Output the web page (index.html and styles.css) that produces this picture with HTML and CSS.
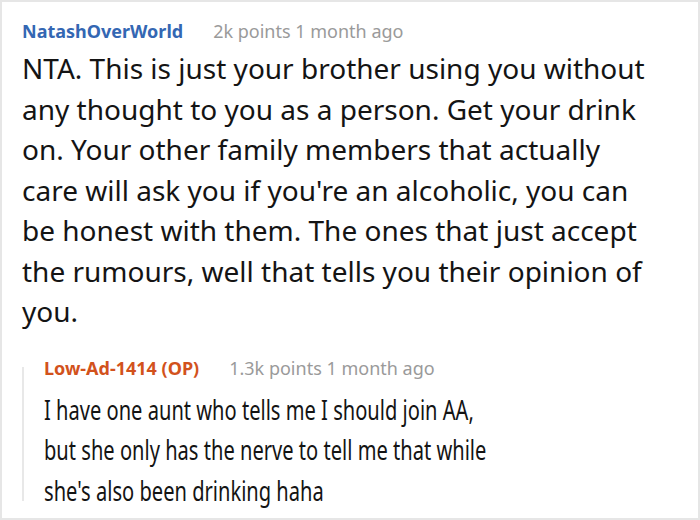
FILE: index.html
```html
<!DOCTYPE html>
<html lang="en">
<head>
<meta charset="utf-8">
<link rel="stylesheet" href="styles.css">
</head>
<body>
<div class="card">
  <div class="comment">
    <div class="meta">
      <span class="author">NatashOverWorld</span>
      <span class="info">2k points 1 month ago</span>
    </div>
    <p class="text">NTA. This is just your brother using you without<br>any thought to you as a person. Get your drink<br>on. Your other family members that actually<br>care will ask you if you're an alcoholic, you can<br>be honest with them. The ones that just accept<br>the rumours, well that tells you their opinion of<br>you.</p>
    <div class="reply">
      <div class="meta">
        <span class="author op">Low-Ad-1414 (OP)</span>
        <span class="info">1.3k points 1 month ago</span>
      </div>
      <p class="text condensed">I have one aunt who tells me I should join AA,<br>but she only has the nerve to tell me that while<br>she's also been drinking haha</p>
    </div>
  </div>
</div>
</body>
</html>
```
FILE: styles.css
```css
html, body {
  margin: 0;
  padding: 0;
  background: #ffffff;
}

.card {
  width: 700px;
  height: 520px;
  box-sizing: border-box;
  border: 2px solid #e6e6e6;
  padding: 14px 20px 0 20px;
  font-family: "Noto Sans", "Open Sans", sans-serif;
  color: #141414;
  overflow: hidden;
}

.meta {
  display: flex;
  gap: 30px;
  font-size: 18px;
  line-height: 30px;
  white-space: nowrap;
}

.author {
  font-weight: 700;
  color: #3467b3;
}

.author.op {
  color: #d2521c;
}

.info {
  color: #9a9a9a;
}

.text {
  margin: 2px 0 0 0;
  font-size: 28px;
  line-height: 40.5px;
  width: 670px;
  white-space: nowrap;
}

.reply {
  position: relative;
  margin-top: 21px;
  padding-left: 22px;
}

.reply::before {
  content: "";
  position: absolute;
  left: 0;
  top: 14px;
  bottom: 9px;
  width: 2px;
  background: #e8e8e8;
}

.reply .text {
  margin-top: 6px;
  width: 660px;
}

.condensed {
  transform: scaleX(0.718);
  transform-origin: left top;
}
```
